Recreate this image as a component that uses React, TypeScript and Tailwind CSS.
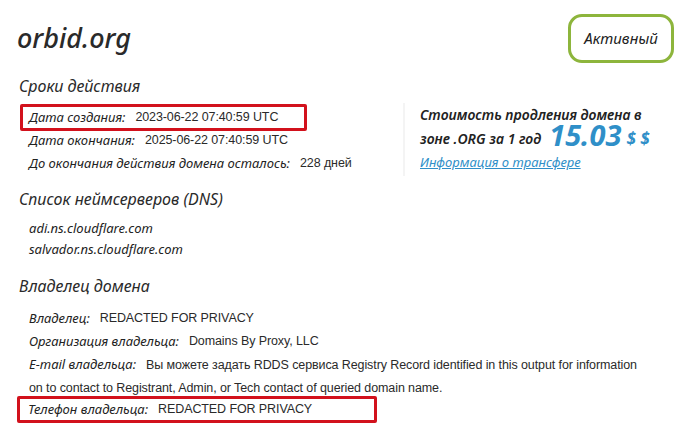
import React from 'react'

const label = "italic text-[#222] [font-family:'Noto_Sans',sans-serif]"
const value = "text-[#2a2a2a] text-[12.5px] tracking-[-0.1px] [font-family:'Liberation_Sans_Narrow','Liberation_Sans',sans-serif]"

function Row({ k, v }: { k: string; v: string }) {
  return (
    <div className="flex items-center h-[23px] text-[13px] leading-[23px]">
      <span className={label}>{k}</span>
      <span className={value + ' ml-[10px]'}>{v}</span>
    </div>
  )
}

function BoxedRow({ k, v, w, ml }: { k: string; v: string; w: string; ml: string }) {
  return (
    <div className={'flex items-center h-[27px] -my-[2px] border-[3px] border-[#d2111c] rounded-[2px] text-[13px] ' + w + ' ' + ml}>
      <span className={label}>{k}</span>
      <span className={value + ' ml-[10px]'}>{v}</span>
    </div>
  )
}

export default function App() {
  return (
    <div className="w-[696px] h-[425px] bg-white overflow-hidden relative pl-[17px]">
      {/* header */}
      <div className="flex items-start justify-between pr-[22px]">
        <h1 className="mt-[22px] text-[27px] leading-[32px] font-medium italic text-[#2a2a2a] [font-family:'Noto_Sans',sans-serif]">
          orbid.org
        </h1>
        <div className="mt-[14px] w-[106px] h-[49px] border-[3px] border-[#8db53c] rounded-[14px] flex items-center justify-center">
          <span className="italic text-[15px] text-[#222] [font-family:'Noto_Sans',sans-serif]">Активный</span>
        </div>
      </div>

      <h2 className="mt-[13px] pl-[2px] text-[16px] leading-[20px] italic text-[#2a2a2a] [font-family:'Noto_Sans',sans-serif]">
        Сроки действия
      </h2>

      <div className="flex mt-[10px]">
        <div className="w-[386px] pl-[12px]">
          <BoxedRow k="Дата создания:" v="2023-06-22 07:40:59 UTC" w="w-[287px] pl-[6px]" ml="-ml-[9px]" />
          <Row k="Дата окончания:" v="2025-06-22 07:40:59 UTC" />
          <Row k="До окончания действия домена осталось:" v="228 дней" />
        </div>
        <div className="-mt-[3px] border-l-[2px] border-[#f4f4f4] pl-[15px] h-[73px]">
          <div className="text-[14px] leading-[23px] italic font-semibold text-[#222] [font-family:'Noto_Sans',sans-serif]">
            Стоимость продления домена в
          </div>
          <div className="flex items-end h-[24px] text-[14px] italic font-semibold text-[#222] [font-family:'Noto_Sans',sans-serif]">
            <span className="leading-[22px]">зоне .ORG за 1 год</span>
            <span className="ml-[8px] text-[29px] leading-[30px] font-bold text-[#2f8fc8]">15.03</span>
            <span className="ml-[5px] text-[17px] leading-[22px] font-bold text-[#2f8fc8]">$ $</span>
          </div>
          <a className="block mt-[2px] text-[13px] leading-[20px] italic underline text-[#2f8fc8] [font-family:'Noto_Sans',sans-serif]">
            Информация о трансфере
          </a>
        </div>
      </div>

      <h2 className="mt-[12px] pl-[2px] text-[16px] leading-[22px] italic text-[#2a2a2a] [font-family:'Noto_Sans',sans-serif]">
        Список неймсерверов (DNS)
      </h2>
      <div className="mt-[8px] pl-[12px] text-[13px] leading-[21px] italic text-[#222] [font-family:'Noto_Sans',sans-serif]">
        <div>adi.ns.cloudflare.com</div>
        <div>salvador.ns.cloudflare.com</div>
      </div>

      <h2 className="mt-[15px] pl-[2px] text-[16px] leading-[22px] italic text-[#2a2a2a] [font-family:'Noto_Sans',sans-serif]">
        Владелец домена
      </h2>
      <div className="mt-[10px] pl-[12px]">
        <Row k="Владелец:" v="REDACTED FOR PRIVACY" />
        <Row k="Организация владельца:" v="Domains By Proxy, LLC" />
        <div className="h-[45px] text-[13px] leading-[22px]">
          <span className={label}>E-mail владельца:</span>
          <span className={value + ' ml-[10px]'}>
            Вы можете задать RDDS сервиса Registry Record identified in this output for information
            <br />
            on to contact to Registrant, Admin, or Tech contact of queried domain name.
          </span>
        </div>
        <BoxedRow k="Телефон владельца:" v="REDACTED FOR PRIVACY" w="w-[360px] pl-[8px]" ml="-ml-[12px]" />
      </div>
    </div>
  )
}
